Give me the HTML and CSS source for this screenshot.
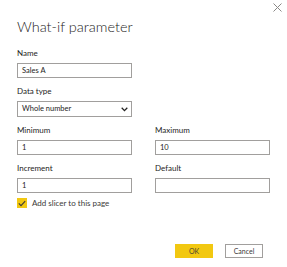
FILE: index.html
```html
<!DOCTYPE html>
<html>
<head>
<meta charset="utf-8">
<link rel="stylesheet" href="styles.css">
</head>
<body>
<div class="dialog">
  <button class="close" aria-label="Close">
    <svg width="9" height="9" viewBox="0 0 9 9"><path d="M0.5 0.5 L8.5 8.5 M8.5 0.5 L0.5 8.5" stroke="#8a8886" stroke-width="1" fill="none"/></svg>
  </button>
  <h1 class="title">What-if parameter</h1>
  <div class="field">
    <label class="label">Name</label>
    <div class="input">Sales A</div>
  </div>
  <div class="field">
    <label class="label">Data type</label>
    <div class="input select">
      <span>Whole number</span>
      <svg width="7" height="5" viewBox="0 0 7 5"><path d="M0.7 0.8 L3.5 3.6 L6.3 0.8" stroke="#252423" stroke-width="1.3" fill="none"/></svg>
    </div>
  </div>
  <div class="grid">
    <div class="field">
      <label class="label">Minimum</label>
      <div class="input">1</div>
    </div>
    <div class="field">
      <label class="label">Maximum</label>
      <div class="input">10</div>
    </div>
    <div class="field">
      <label class="label">Increment</label>
      <div class="input">1</div>
    </div>
    <div class="field">
      <label class="label">Default</label>
      <div class="input"></div>
    </div>
  </div>
  <div class="check-row">
    <span class="checkbox">
      <svg width="8" height="7" viewBox="0 0 8 7"><path d="M0.8 3.4 L3 5.6 L7.2 1.2" stroke="#3b3a39" stroke-width="1.1" fill="none"/></svg>
    </span>
    <span class="check-label">Add slicer to this page</span>
  </div>
  <div class="actions">
    <button class="btn primary">OK</button>
    <button class="btn">Cancel</button>
  </div>
</div>
</body>
</html>
```
FILE: styles.css
```css
html, body {
  margin: 0;
  padding: 0;
  background: #ffffff;
}
body {
  font-family: Lato, "Open Sans", sans-serif;
  color: #252423;
  width: 287px;
  height: 267px;
  overflow: hidden;
}
.dialog {
  position: relative;
  padding: 16px 17px 0 17px;
  box-sizing: border-box;
  width: 287px;
  height: 267px;
}
.close {
  position: absolute;
  top: 3px;
  right: 5px;
  width: 9px;
  height: 9px;
  padding: 0;
  border: 0;
  background: transparent;
  display: flex;
}
.title {
  margin: 0 0 9px 0;
  font-weight: 300;
  font-size: 14.5px;
  line-height: 22px;
  color: #252423;
}
.field {
  display: flex;
  flex-direction: column;
  width: 115px;
  margin-bottom: 7px;
}
.label {
  font-size: 8px;
  line-height: 12px;
  color: #252423;
  margin-bottom: 4px;
}
.input {
  box-sizing: border-box;
  height: 15px;
  border: 1px solid #a19f9d;
  font-size: 7.5px;
  line-height: 13px;
  padding: 0 4px;
  color: #252423;
}
.select {
  height: 16px;
  line-height: 14px;
  display: flex;
  justify-content: space-between;
  align-items: center;
  padding: 0 3px 0 4px;
}
.grid {
  display: grid;
  grid-template-columns: 115px 115px;
  column-gap: 23px;
}
.check-row {
  display: flex;
  align-items: center;
  gap: 5px;
  margin-top: -3px;
}
.checkbox {
  width: 10px;
  height: 10px;
  background: #f2c811;
  display: flex;
  align-items: center;
  justify-content: center;
}
.check-label {
  font-size: 8px;
  line-height: 12px;
  color: #3b3a39;
}
.actions {
  display: flex;
  justify-content: flex-end;
  gap: 12px;
  margin-top: 35px;
  padding-right: 7px;
}
.btn {
  box-sizing: border-box;
  width: 38px;
  height: 14px;
  padding: 0;
  border: 1px solid #a19f9d;
  background: #ffffff;
  font-family: Lato, "Open Sans", sans-serif;
  font-size: 7px;
  line-height: 12px;
  color: #3b3a39;
}
.btn.primary {
  background: #f2c811;
  border-color: #f2c811;
  color: #4a4630;
}
```
